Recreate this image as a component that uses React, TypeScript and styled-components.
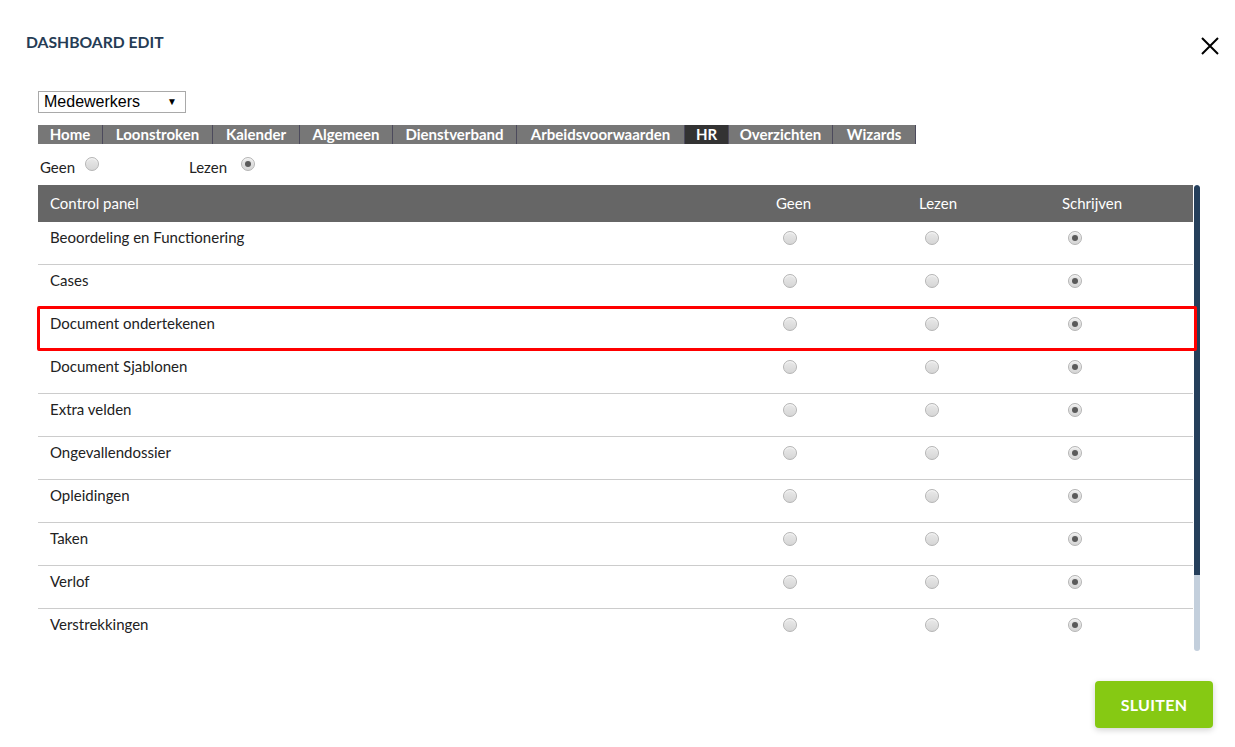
import React from "react";
import styled, { createGlobalStyle } from "styled-components";

const GlobalStyle = createGlobalStyle`
  html, body {
    margin: 0;
    padding: 0;
    background: #ffffff;
  }
  body {
    font-family: "Lato", "Open Sans", sans-serif;
    color: #222;
  }
  * { box-sizing: border-box; }
`;

const Modal = styled.div`
  width: 1235px;
  height: 747px;
  display: flex;
  flex-direction: column;
  background: #fff;
`;

const Header = styled.header`
  display: flex;
  justify-content: space-between;
  align-items: flex-start;
  height: 51px;
  padding: 33px 16px 0 26px;
`;

const Title = styled.h1`
  margin: 0;
  font-size: 15.7px;
  line-height: 18px;
  font-weight: 700;
  color: #253c55;
`;

const CloseButton = styled.button`
  border: 0;
  background: none;
  padding: 0;
  margin-top: 4px;
  width: 18px;
  height: 18px;
  display: flex;
  cursor: pointer;
`;

const Body = styled.div`
  padding: 40px 0 0 38px;
  display: flex;
  flex-direction: column;
`;

const Select = styled.div`
  width: 148px;
  height: 22px;
  border: 1px solid #a9a9a9;
  display: flex;
  align-items: center;
  justify-content: space-between;
  padding: 0 8px 0 5px;
  font-family: "Liberation Sans", Arial, sans-serif;
  font-size: 16px;
  color: #000;
`;

const Arrow = styled.span`
  font-size: 10px;
  line-height: 1;
`;

const TabBar = styled.nav`
  margin-top: 12px;
  display: flex;
  height: 19px;
`;

const Tab = styled.div<{ $w: number; $active?: boolean }>`
  width: ${(p) => p.$w}px;
  background: ${(p) => (p.$active ? "#333333" : "#777777")};
  border-right: 1px solid #4c4a5c;
  color: #fff;
  font-weight: 700;
  font-size: 15px;
  line-height: 19px;
  text-align: center;
  white-space: nowrap;
`;

const DefaultRow = styled.div`
  display: flex;
  align-items: center;
  height: 20px;
  margin-top: 13px;
  font-size: 15px;
`;

const DefaultOption = styled.label<{ $w: number }>`
  width: ${(p) => p.$w}px;
  display: flex;
  align-items: center;
  padding-left: 2px;
`;

const Radio = styled.span<{ $checked?: boolean; $ml?: number; $raise?: number }>`
  display: inline-block;
  position: relative;
  width: 14px;
  height: 14px;
  border-radius: 50%;
  margin-left: ${(p) => p.$ml ?? 0}px;
  transform: translateY(${(p) => -(p.$raise ?? 0)}px);
  border: 1px solid #b4b4b4;
  background: linear-gradient(#e9e9e9, #d6d6d6);
  box-shadow: inset 0 1px 1px rgba(255, 255, 255, 0.7);
  flex: none;
  &::after {
    content: "";
    display: ${(p) => (p.$checked ? "block" : "none")};
    position: absolute;
    left: 3px;
    top: 3px;
    width: 6px;
    height: 6px;
    border-radius: 50%;
    background: #5a5a5a;
  }
`;

const TableWrap = styled.div`
  position: relative;
  margin-top: 8px;
  display: flex;
  gap: 1px;
  width: 1162px;
`;

const TablePane = styled.div`
  width: 1155px;
  height: 466px;
  overflow: hidden;
`;

const ScrollTrack = styled.div`
  width: 6px;
  height: 466px;
  display: flex;
  flex-direction: column;
  background: #c3cfdc;
  border-radius: 3px;
  overflow: hidden;
`;

const ScrollThumb = styled.div`
  height: 390px;
  background: #253f5b;
  border-radius: 3px 3px 0 0;
`;

const Grid = styled.div`
  display: grid;
  grid-template-columns: 1fr 143px 143px 143px;
`;

const HeadCell = styled.div`
  height: 37px;
  background: #666666;
  color: #fff;
  font-size: 15px;
  line-height: 37px;
  padding-left: 12px;
`;

const Cell = styled.div`
  height: 43px;
  border-bottom: 1px solid #cccccc;
  padding: 6px 0 0 12px;
  font-size: 15px;
  line-height: 18px;
`;

const RadioCell = styled(Cell)`
  padding-top: 8px;
`;

const Highlight = styled.div`
  position: absolute;
  left: -1px;
  top: 121px;
  width: 1160px;
  height: 45px;
  border: 3px solid #ff0000;
  border-radius: 2px;
  pointer-events: none;
`;

const Footer = styled.footer`
  margin-top: auto;
  display: flex;
  justify-content: flex-end;
  padding: 0 22px 19px 0;
`;

const PrimaryButton = styled.button`
  width: 118px;
  height: 47px;
  border: 0;
  border-radius: 4px;
  background: #86c913;
  color: #fff;
  font-family: "Lato", sans-serif;
  font-weight: 700;
  font-size: 16px;
  letter-spacing: 0.3px;
  box-shadow: 0 2px 6px rgba(0, 0, 0, 0.18);
  cursor: pointer;
`;

const tabs = [
  { label: "Home", w: 65 },
  { label: "Loonstroken", w: 110 },
  { label: "Kalender", w: 87 },
  { label: "Algemeen", w: 93 },
  { label: "Dienstverband", w: 124 },
  { label: "Arbeidsvoorwaarden", w: 168 },
  { label: "HR", w: 44, active: true },
  { label: "Overzichten", w: 104 },
  { label: "Wizards", w: 83 },
];

const rows = [
  "Beoordeling en Functionering",
  "Cases",
  "Document ondertekenen",
  "Document Sjablonen",
  "Extra velden",
  "Ongevallendossier",
  "Opleidingen",
  "Taken",
  "Verlof",
  "Verstrekkingen",
];

export default function App() {
  return (
    <>
      <GlobalStyle />
      <Modal>
        <Header>
          <Title>DASHBOARD EDIT</Title>
          <CloseButton aria-label="Sluiten">
            <svg width="18" height="18" viewBox="0 0 18 18">
              <path d="M1 1L17 17M17 1L1 17" stroke="#000" strokeWidth="2" />
            </svg>
          </CloseButton>
        </Header>
        <Body>
          <Select>
            <span>Medewerkers</span>
            <Arrow>▼</Arrow>
          </Select>
          <TabBar>
            {tabs.map((t) => (
              <Tab key={t.label} $w={t.w} $active={t.active}>
                {t.label}
              </Tab>
            ))}
          </TabBar>
          <DefaultRow>
            <DefaultOption $w={149}>
              Geen <Radio $ml={10} $raise={3} />
            </DefaultOption>
            <DefaultOption $w={120}>
              Lezen <Radio $checked $ml={14} $raise={3} />
            </DefaultOption>
          </DefaultRow>
          <TableWrap>
            <TablePane>
              <Grid>
                <HeadCell>Control panel</HeadCell>
                <HeadCell>Geen</HeadCell>
                <HeadCell>Lezen</HeadCell>
                <HeadCell>Schrijven</HeadCell>
                {rows.map((r) => (
                  <React.Fragment key={r}>
                    <Cell>{r}</Cell>
                    <RadioCell>
                      <Radio $ml={7} />
                    </RadioCell>
                    <RadioCell>
                      <Radio $ml={6} />
                    </RadioCell>
                    <RadioCell>
                      <Radio $checked $ml={6} />
                    </RadioCell>
                  </React.Fragment>
                ))}
              </Grid>
            </TablePane>
            <ScrollTrack>
              <ScrollThumb />
            </ScrollTrack>
            <Highlight />
          </TableWrap>
        </Body>
        <Footer>
          <PrimaryButton>SLUITEN</PrimaryButton>
        </Footer>
      </Modal>
    </>
  );
}
